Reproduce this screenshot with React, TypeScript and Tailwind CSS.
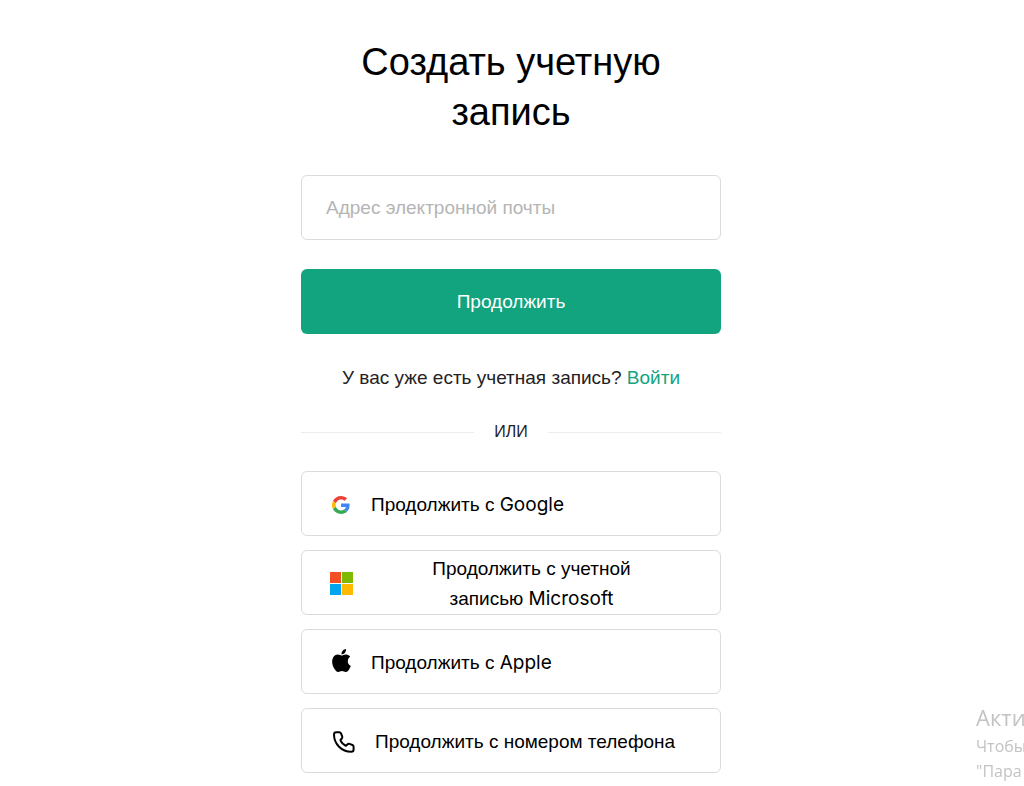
import type { ReactNode } from "react";
import { SiApple } from "react-icons/si";

function GoogleIcon() {
  return (
    <svg viewBox="0 0 48 48" className="size-[18px]" aria-hidden="true">
      <path
        fill="#EA4335"
        d="M24 9.5c3.54 0 6.71 1.22 9.21 3.6l6.85-6.85C35.9 2.38 30.47 0 24 0 14.62 0 6.51 5.38 2.56 13.22l7.98 6.19C12.43 13.72 17.74 9.5 24 9.5z"
      />
      <path
        fill="#4285F4"
        d="M46.98 24.55c0-1.57-.15-3.09-.38-4.55H24v9.02h12.94c-.58 2.96-2.26 5.48-4.78 7.18l7.73 6c4.51-4.18 7.09-10.36 7.09-17.65z"
      />
      <path
        fill="#FBBC05"
        d="M10.53 28.59c-.48-1.45-.76-2.99-.76-4.59s.27-3.14.76-4.59l-7.98-6.19C.92 16.46 0 20.12 0 24c0 3.88.92 7.54 2.56 10.78l7.97-6.19z"
      />
      <path
        fill="#34A853"
        d="M24 48c6.48 0 11.93-2.13 15.89-5.81l-7.73-6c-2.15 1.45-4.92 2.3-8.16 2.3-6.26 0-11.57-4.22-13.47-9.91l-7.98 6.19C6.51 42.62 14.62 48 24 48z"
      />
    </svg>
  );
}

function MicrosoftIcon() {
  return (
    <svg viewBox="0 0 23 23" className="size-[23px]" aria-hidden="true">
      <path fill="#f25022" d="M0 0h11v11H0z" />
      <path fill="#7fba00" d="M12 0h11v11H12z" />
      <path fill="#00a4ef" d="M0 12h11v11H0z" />
      <path fill="#ffb900" d="M12 12h11v11H12z" />
    </svg>
  );
}

function PhoneIcon() {
  return (
    <svg
      viewBox="0 0 24 24"
      className="size-6"
      fill="none"
      stroke="currentColor"
      strokeWidth="2"
      strokeLinejoin="round"
      aria-hidden="true"
    >
      <path d="M4.3 2.2h2.9c.8 0 1.500.5 1.800 1.200l1.200 3c.3.8.1 1.500-.4 2.100l-1 1c-.3.3-.4.8-.2 1.200 1.100 2.100 2.700 3.700 4.800 4.800.4.2.900.1 1.200-.2l1-1c.5-.5 1.300-.7 2-.4l2.800 1.100c.7.3 1.200 1 1.200 1.800v2.700c0 1.300-1.100 2.300-2.400 2.300C9.700 21.800 2 14.100 2 4.600c0-1.300 1-2.400 2.300-2.400z" />
    </svg>
  );
}

type Provider = {
  name: string;
  icon: ReactNode;
  label: ReactNode;
  labelClass: string;
};

const providers: Provider[] = [
  {
    name: "google",
    icon: <GoogleIcon />,
    label: (
      <>
        Продолжить с <span className="font-['Inter']">Google</span>
      </>
    ),
    labelClass: "pl-4 text-left",
  },
  {
    name: "microsoft",
    icon: <MicrosoftIcon />,
    label: (
      <>
        Продолжить с учетной
        <br />
        записью <span className="font-['Inter']">Microsoft</span>
      </>
    ),
    labelClass: "flex-1 pl-4 pr-7 text-center",
  },
  {
    name: "apple",
    icon: <SiApple className="mb-1 size-[23px]" aria-hidden="true" />,
    label: (
      <>
        Продолжить с <span className="font-['Inter']">Apple</span>
      </>
    ),
    labelClass: "pl-4 text-left",
  },
  {
    name: "phone",
    icon: (
      <span className="pl-1.5">
        <PhoneIcon />
      </span>
    ),
    label: "Продолжить с номером телефона",
    labelClass: "pl-5 text-left",
  },
];

function ProviderButton({ icon, label, labelClass }: Provider) {
  return (
    <button
      type="button"
      className="flex min-h-[65px] w-full items-center rounded-md border border-[#d9dbdd] bg-white pt-0.5 pl-[25px] text-black"
    >
      <span className="flex w-7 shrink-0 items-center justify-center">{icon}</span>
      <span className={labelClass}>{label}</span>
    </button>
  );
}

export default function App() {
  return (
    <div className="min-h-screen overflow-hidden bg-white pr-0.5 font-['Liberation_Sans',sans-serif] text-[19px] leading-[30px] text-[#1f2123]">
      <main className="mx-auto w-full max-w-[420px] pt-[37px] pb-3">
        <h1 className="px-10 text-center text-[38px] leading-[50px] text-black">
          Создать учетную запись
        </h1>

        <form onSubmit={(e) => e.preventDefault()}>
          <input
            type="email"
            aria-label="Адрес электронной почты"
            placeholder="Адрес электронной почты"
            className="mt-[38px] block h-[65px] w-full rounded-md border border-[#d9dbdd] bg-white px-6 outline-none placeholder:text-[#b5b5b5]"
          />
          <button
            type="submit"
            className="mt-[29px] block h-[65px] w-full rounded-md bg-[#12a37f] text-white"
          >
            Продолжить
          </button>
        </form>

        <p className="mt-[29px] text-center">
          У вас уже есть учетная запись?{" "}
          <a href="#" className="text-[#12a37f]">
            Войти
          </a>
        </p>

        <div className="mt-6 flex items-center gap-5 text-base leading-[30px] uppercase">
          <span className="h-px flex-1 bg-[#ececec]" />
          или
          <span className="h-px flex-1 bg-[#ececec]" />
        </div>

        <div className="mt-6 flex flex-col gap-3.5">
          {providers.map((provider) => (
            <ProviderButton key={provider.name} {...provider} />
          ))}
        </div>
      </main>

      <aside className="pointer-events-none fixed right-0 bottom-0 w-12 overflow-hidden pb-0.5 font-['Open_Sans',sans-serif] whitespace-nowrap text-[#c3c3c3]">
        <p className="text-[22px] leading-[34px]">Акти</p>
        <p className="text-base leading-[25px]">Чтобы</p>
        <p className="text-base leading-[25px]">"Пара</p>
      </aside>
    </div>
  );
}
